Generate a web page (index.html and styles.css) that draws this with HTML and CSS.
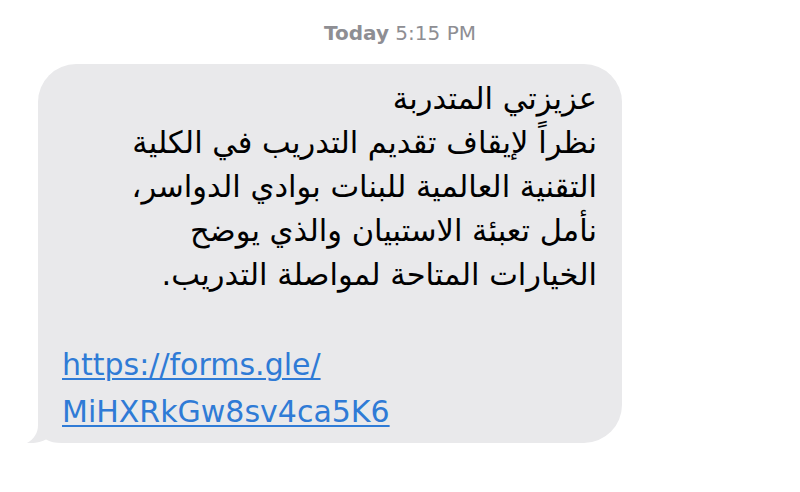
FILE: index.html
```html
<!DOCTYPE html>
<html lang="en">
<head>
<meta charset="utf-8">
<title>Message</title>
<link rel="stylesheet" href="styles.css">
</head>
<body>
<div class="screen">
  <div class="stamp"><span class="day">Today</span> 5:15 PM</div>
  <div class="row">
    <div class="bubble">
      <svg class="tail" width="60" height="40" viewBox="0 0 60 40" aria-hidden="true">
        <path d="M12 0 L12 22 C12 30 8 36 1 40 C9 40.6 15 39 20 36.5 C24 39 29 40 36 40 L60 40 L60 0 Z" fill="#e9e9eb"/>
      </svg>
      <p class="msg" dir="rtl" lang="ar">عزيزتي المتدربة<br>نظراً لإيقاف تقديم التدريب في الكلية<br>التقنية العالمية للبنات بوادي الدواسر،<br>نأمل تعبئة الاستبيان والذي يوضح<br>الخيارات المتاحة لمواصلة التدريب.</p>
      <p class="link" dir="ltr" lang="en"><a href="#"><span class="ln">https://forms.gle/</span><span class="ln">MiHXRkGw8sv4ca5K6</span></a></p>
    </div>
  </div>
</div>
</body>
</html>
```

FILE: styles.css
```css
html, body {
  margin: 0;
  padding: 0;
  background: #ffffff;
}
.screen {
  width: 800px;
  height: 492px;
  display: flex;
  flex-direction: column;
  font-family: "DejaVu Sans", "Noto Sans", sans-serif;
}
.stamp {
  text-align: center;
  color: #8e8e93;
  font-size: 20px;
  line-height: 24px;
  padding-top: 21px;
  height: 43px;
  box-sizing: border-box;
  margin-bottom: 21px;
}
.day {
  font-weight: bold;
}
.row {
  display: flex;
  padding-left: 38px;
}
.bubble {
  position: relative;
  width: 584px;
  height: 379px;
  box-sizing: border-box;
  background: #e9e9eb;
  border-radius: 38px;
  padding: 13px 25px 0 24px;
}
.msg {
  position: relative;
  margin: 0;
  font-size: 30.5px;
  line-height: 44px;
  color: #000000;
  text-align: right;
}
.link {
  position: relative;
  margin: 44px 0 0 0;
  font-size: 30px;
  line-height: 47px;
  text-align: left;
}
.link a {
  color: #2f7bd6;
  text-decoration: none;
}
.ln {
  display: block;
  width: max-content;
  text-decoration: underline;
  text-decoration-thickness: 1.5px;
  text-underline-offset: 3px;
}
.tail {
  position: absolute;
  left: -12px;
  bottom: 0;
  display: block;
}
```
